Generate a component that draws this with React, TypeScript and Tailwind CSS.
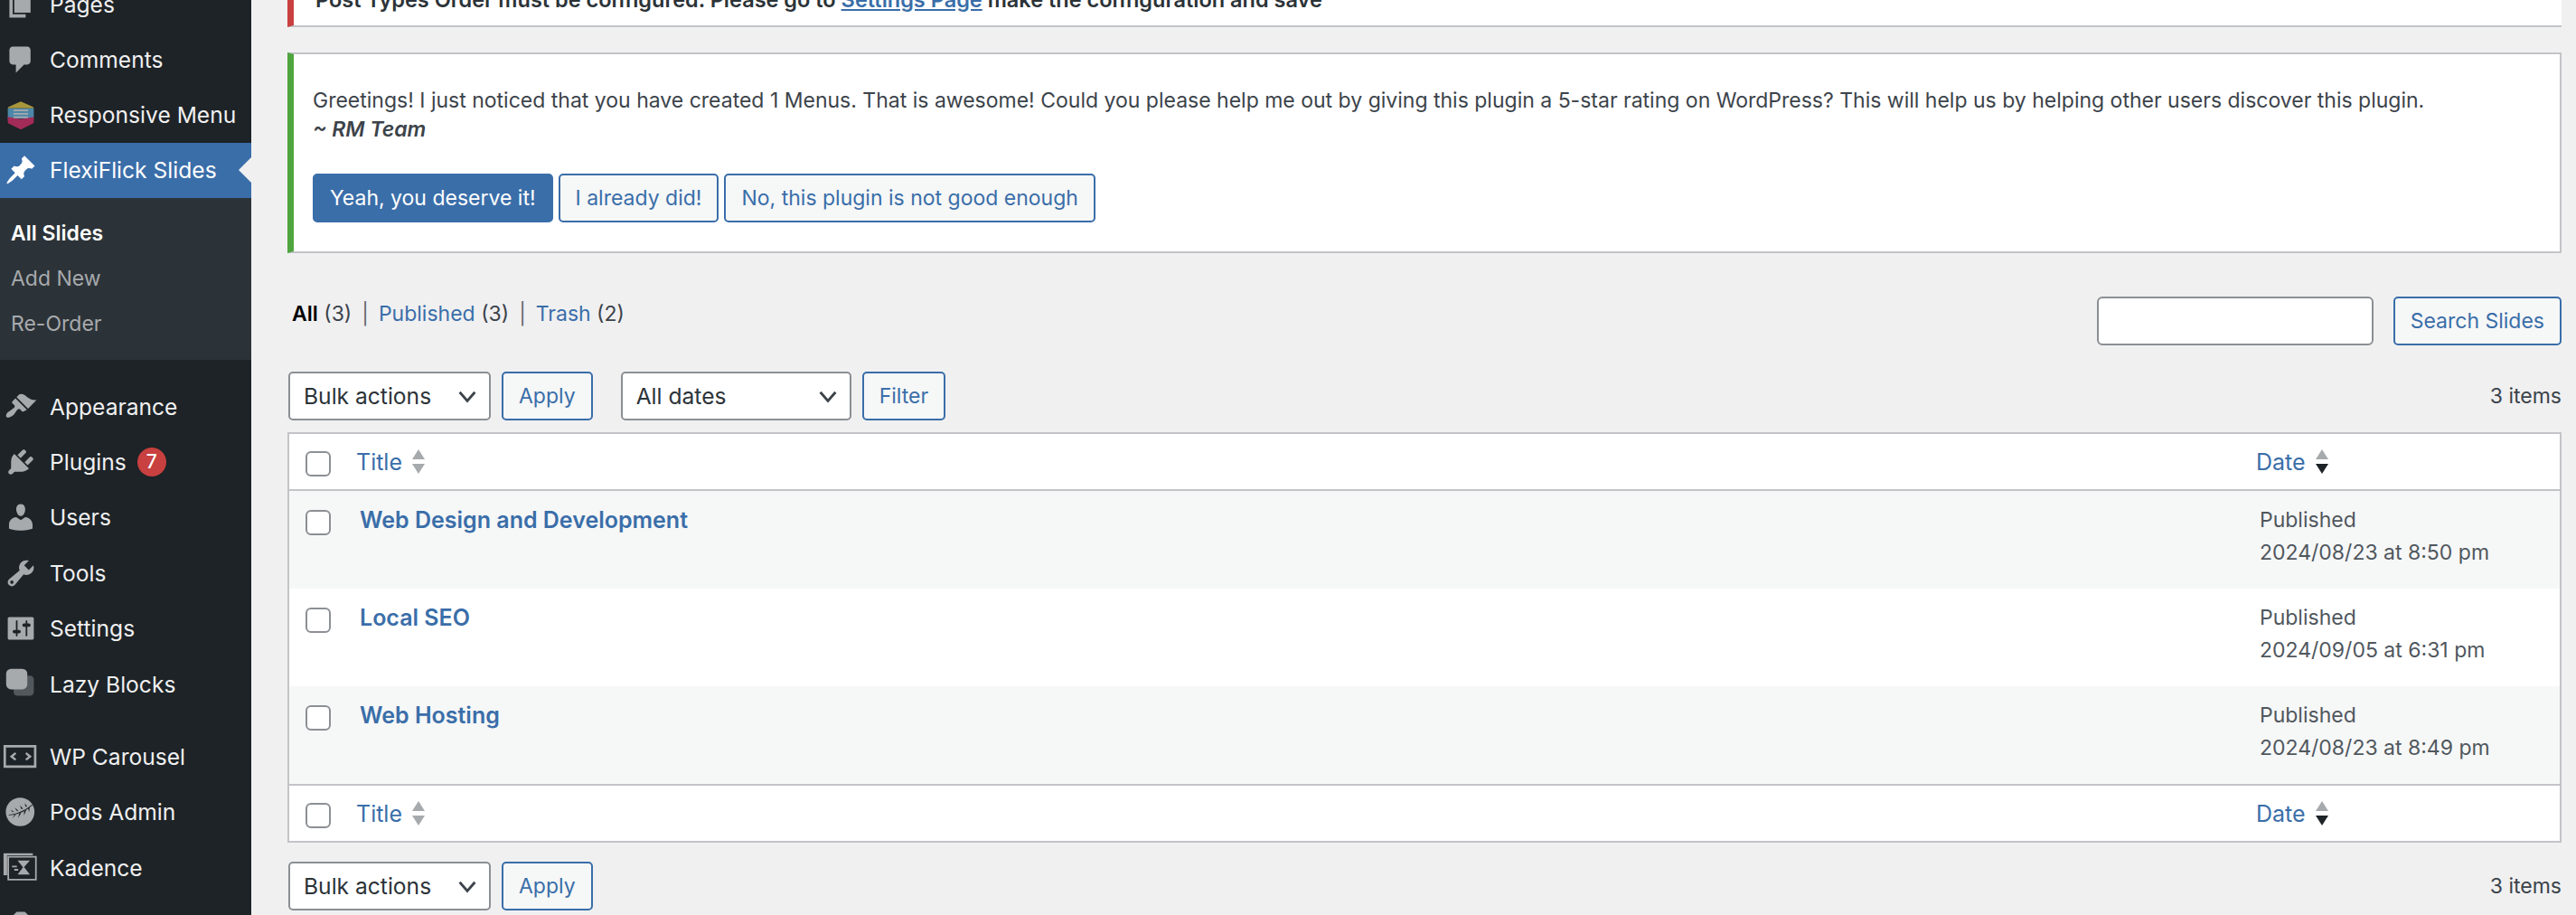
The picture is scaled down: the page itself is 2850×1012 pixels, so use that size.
import type { ReactNode } from 'react';

const icons: Record<string, ReactNode> = {
  pages: <path d="M6 15V2h10v13H6zm-1 1h8v2H3V5h2v11z" />,
  comments: <path d="M5 2h9q.82 0 1.41.59T16 4v7q0 .82-.59 1.41T14 13h-2l-5 5v-5H5q-.82 0-1.41-.59T3 11V4q0-.82.59-1.41T5 2z" />,
  pin: <path d="M10.44 3.02l1.82-1.82 6.36 6.35-1.83 1.82c-1.05-.68-2.48-.57-3.41.36l-.75.75c-.92.93-1.04 2.35-.35 3.41l-1.83 1.82-2.41-2.41-2.8 2.79c-.42.42-3.38 2.71-3.8 2.29s1.86-3.39 2.28-3.81l2.79-2.79L4.1 9.36l1.83-1.82c1.05.69 2.48.57 3.4-.36l.75-.75c.93-.92 1.05-2.35.36-3.41z" />,
  brush: <path d="M14.48 11.06L7.41 3.99l1.5-1.5c.5-.56 2.3-.47 3.51.32 1.21.8 1.43 1.28 2.91 2.1 1.18.64 2.45 1.26 4.45.85zm-.71.71L6.7 4.7 4.93 6.47c-.39.39-.39 1.02 0 1.41l1.06 1.06c.39.39.39 1.03 0 1.42-.6.6-1.43 1.11-2.21 1.69-.35.26-.7.53-1.01.84C1.43 13.23.99 15.2.99 15.2c-.33.75.6 1.71 1.32 1.38-.01 0 1.98-.44 3.32-1.78.31-.31.58-.66.84-1.01.58-.78 1.09-1.61 1.69-2.21.39-.39 1.02-.39 1.41 0l1.06 1.06c.39.39 1.02.39 1.41 0z" />,
  plug: <path d="M13.11 4.36L9.87 7.6 8 5.73l3.24-3.24c.35-.34 1.05-.2 1.56.32.52.51.66 1.21.31 1.55zm-8 1.77l.91-1.12 9.01 9.01-1.19.84c-.71.71-2.63 1.16-3.82 1.16H6.14L4.9 17.26c-.59.59-1.54.59-2.12 0-.59-.58-.59-1.53 0-2.12l1.24-1.24v-3.88c0-1.13.4-3.19 1.09-3.89zm7.26 3.97l3.24-3.24c.34-.35 1.04-.21 1.55.31.52.51.66 1.21.31 1.55l-3.24 3.25z" />,
  users: <path d="M10 9.25c-2.27 0-2.73-3.44-2.73-3.44C7 4.02 7.82 2 9.97 2c2.16 0 2.98 2.02 2.71 3.81 0 0-.41 3.44-2.68 3.44zm0 2.57L12.72 10c2.39 0 4.52 2.33 4.52 4.53v2.49s-3.65 1.13-7.24 1.13c-3.65 0-7.24-1.13-7.24-1.13v-2.49c0-2.25 1.94-4.48 4.47-4.48z" />,
  tools: <path d="M16.68 9.77c-1.34 1.34-3.3 1.67-4.95.99l-5.41 6.52c-.99.99-2.59.99-3.58 0s-.99-2.59 0-3.57l6.52-5.42c-.68-1.65-.35-3.61.99-4.95 1.28-1.28 3.12-1.62 4.72-1.06l-2.89 2.89 2.82 2.82 2.86-2.87c.53 1.58.18 3.39-1.08 4.65zM3.81 16.21c.4.39 1.04.39 1.43 0 .4-.4.4-1.04 0-1.43-.39-.4-1.03-.4-1.43 0-.39.39-.39 1.03 0 1.43z" />,
  settings: <path fillRule="evenodd" d="M18 16V4c0-.55-.45-1-1-1H3c-.55 0-1 .45-1 1v12c0 .55.45 1 1 1h14c.55 0 1-.45 1-1zM8 11h1c.55 0 1 .45 1 1s-.45 1-1 1H8v1.5c0 .28-.22.5-.5.5s-.5-.22-.5-.5V13H6c-.55 0-1-.45-1-1s.45-1 1-1h1V5.5c0-.28.22-.5.5-.5s.5.22.5.5V11zm5-2h-1c-.55 0-1-.45-1-1s.45-1 1-1h1V5.5c0-.28.22-.5.5-.5s.5.22.5.5V7h1c.55 0 1 .45 1 1s-.45 1-1 1h-1v5.5c0 .28-.22.5-.5.5s-.5-.22-.5-.5V9z" />,
  responsive: (
    <>
      <path fill="#a8963c" d="M10 1.8l7.6 3.4.4.8H2l.4-.8z" />
      <path fill="#4d86a8" d="M2 6h16v6.4H2z" />
      <path fill="#a32b58" d="M2 11.2l8 1.4 8-1.4v3.4l-.4.7L10 19l-7.6-3.7-.4-.7z" />
      <path fill="#a7aaad" d="M5.5 6.8h9v1h-9zm0 2.1h9v1h-9zm0 2.1h9v1h-9z" />
    </>
  ),
  lazy: (
    <>
      <rect x="5.6" y="4.6" width="12.4" height="12.4" rx="2.4" fill="#53585d" />
      <rect x="1" y="0.4" width="13" height="12.6" rx="3" />
    </>
  ),
  carousel: (
    <>
      <path fillRule="evenodd" d="M-.6 2.8h20.2v14H-.6zm1.5 1.5v11h17.2v-11z" />
      <path d="M6.4 7.2L3.2 9.8l3.2 2.6.9-1-1.9-1.6 1.9-1.6zm7.2 0l3.2 2.6-3.2 2.6-.9-1 1.9-1.6-1.9-1.6z" />
    </>
  ),
  pods: (
    <>
      <circle cx="9.6" cy="10" r="8.8" />
      <path d="M2.6 11.6c3.4-.2 9-1.6 14.4-6.2l.2.5c-5 4.6-10.6 6.2-14.6 6.2z" fill="#1d2327" />
      <path d="M5 10.2l-1.4-1.6 2.2 1.2zm2.6-.7L6.2 7.4l2.3 1.7zm2.8-1.1L9.4 6l2 1.9zm2.6-1.4l-.7-2.4 1.6 1.9zM6 11.8l-1.1 2.1 2.2-2.4zm3-.8l-.6 2.6 1.9-3zm3-1.4v2.6l1.4-3.4zm2.4-1.8l.8 2.2.2-3z" fill="#1d2327" />
    </>
  ),
  kadence: (
    <>
      <path d="M-.6 1h18v1.2H1.6v12.2H-.6z" />
      <path fillRule="evenodd" d="M1.8 2.6h18v15h-18zm1 1v13h16v-13z" />
      <path d="M8 5.4h7.6l-3.6 4 3.6 4.6H8l3.4-4.4zM4.6 8.6h3v1h-3zm1.4 2h2.4v1H6z" />
    </>
  ),
  camera: <path d="M2 5h3.5L7.5 3h5l2 2H18v13H2z" />,
};

type MenuItem = { label: string; icon: string; badge?: string };

const topItems: MenuItem[] = [
  { label: 'Pages', icon: 'pages' },
  { label: 'Comments', icon: 'comments' },
  { label: 'Responsive Menu', icon: 'responsive' },
];
const midItems: MenuItem[] = [
  { label: 'Appearance', icon: 'brush' },
  { label: 'Plugins', icon: 'plug', badge: '7' },
  { label: 'Users', icon: 'users' },
  { label: 'Tools', icon: 'tools' },
  { label: 'Settings', icon: 'settings' },
  { label: 'Lazy Blocks', icon: 'lazy' },
];
const lowItems: MenuItem[] = [
  { label: 'WP Carousel', icon: 'carousel' },
  { label: 'Pods Admin', icon: 'pods' },
  { label: 'Kadence', icon: 'kadence' },
  { label: '', icon: 'camera' },
];

const rows = [
  { title: 'Web Design and Development', date: '2024/08/23 at 8:50 pm', stripe: true },
  { title: 'Local SEO', date: '2024/09/05 at 6:31 pm', stripe: false },
  { title: 'Web Hosting', date: '2024/08/23 at 8:49 pm', stripe: true },
];

function MenuRow({ item }: { item: MenuItem }) {
  return (
    <div className="flex h-[61.4px] items-center text-[24.6px] text-[#f0f0f1]">
      <svg viewBox="0 0 20 20" className="ml-[5px] h-[36px] w-[36px] shrink-0 overflow-visible fill-[#a7aaad]">
        {icons[item.icon]}
      </svg>
      <span className="ml-[14px]">{item.label}</span>
      {item.badge && (
        <span className="ml-[12px] flex h-[32px] w-[32px] items-center justify-center rounded-full bg-[#c8403f] text-[21px] font-medium text-white">
          {item.badge}
        </span>
      )}
    </div>
  );
}

function Sidebar() {
  return (
    <aside className="-mt-[26.2px] h-[1100px] w-[278px] shrink-0 bg-[#1d2327]">
      {topItems.map((item) => (
        <MenuRow key={item.label} item={item} />
      ))}
      <div className="relative flex h-[61px] items-center bg-[#3a6ea9] text-[24.6px] text-white">
        <svg viewBox="0 0 20 20" className="ml-[5px] h-[36px] w-[36px] fill-white">
          {icons.pin}
        </svg>
        <span className="ml-[14px]">FlexiFlick Slides</span>
        <span className="absolute right-0 top-[16px] h-0 w-0 border-y-[14px] border-r-[14px] border-y-transparent border-r-[#f0f0f1]" />
      </div>
      <div className="flex h-[179px] flex-col justify-center gap-[22px] bg-[#2c3338] pl-[12px] text-[23px] leading-[28px] text-[#a7aaad]">
        <span className="font-semibold text-white">All Slides</span>
        <span>Add New</span>
        <span>Re-Order</span>
      </div>
      <div className="mt-[21px]">
        {midItems.map((item) => (
          <MenuRow key={item.label} item={item} />
        ))}
      </div>
      <div className="mt-[19px]">
        {lowItems.map((item) => (
          <MenuRow key={item.icon} item={item} />
        ))}
      </div>
    </aside>
  );
}

function Button({ children, primary }: { children: ReactNode; primary?: boolean }) {
  return (
    <button
      className={
        primary
          ? 'h-[54px] rounded-[5px] border-2 border-[#3a6ea9] bg-[#3a6ea9] px-[17px] text-white'
          : 'h-[54px] rounded-[5px] border-2 border-[#3a6ea9] bg-[#f6f7f7] px-[17px] text-[#3a6ea9]'
      }
    >
      {children}
    </button>
  );
}

function Select({ label, width }: { label: string; width: string }) {
  return (
    <div className={`flex h-[54px] items-center justify-between rounded-[5px] border-2 border-[#8c8f94] bg-white pl-[15px] pr-[12px] text-[24.6px] text-[#2c3338] ${width}`}>
      <span>{label}</span>
      <svg viewBox="0 0 20 20" className="h-[24px] w-[24px] fill-none stroke-[#3c434a] stroke-[2.4]">
        <path d="M3 6.5l7 8 7-8" />
      </svg>
    </div>
  );
}

function Checkbox() {
  return <input type="checkbox" className="h-[28px] w-[28px] shrink-0 appearance-none rounded-[6px] border-2 border-[#8c8f94] bg-white" />;
}

function SortArrows({ active }: { active?: boolean }) {
  return (
    <svg viewBox="0 0 14 28" className="h-[28px] w-[14px]">
      <path d="M7 0l7 11H0z" fill="#a7aaad" />
      <path d="M7 27L0 16h14z" fill={active ? '#1d2327' : '#a7aaad'} />
    </svg>
  );
}

function HeadRow({ border }: { border: string }) {
  return (
    <div className={`flex h-[63px] items-center bg-white text-[25px] ${border}`}>
      <div className="ml-[18px] mt-[5px] flex items-center">
        <Checkbox />
      </div>
      <div className="ml-[28px] flex flex-1 items-center gap-[11px] text-[#3a6ea9]">
        Title <SortArrows />
      </div>
      <div className="flex w-[336px] items-center gap-[11px] text-[#3a6ea9]">
        Date <SortArrows active />
      </div>
    </div>
  );
}

function Toolbar({ filters }: { filters?: boolean }) {
  return (
    <div className="flex h-[54px] items-center pl-px">
      <Select label="Bulk actions" width="w-[224px]" />
      <div className="ml-[12px]">
        <Button>Apply</Button>
      </div>
      {filters && (
        <>
          <div className="ml-[31px]">
            <Select label="All dates" width="w-[255px]" />
          </div>
          <div className="ml-[12px]">
            <Button>Filter</Button>
          </div>
        </>
      )}
      <span className="ml-auto text-[#3c434a]">3 items</span>
    </div>
  );
}

export default function App() {
  return (
    <div className="flex h-[1012px] overflow-hidden bg-[#f0f0f1] font-['Inter',sans-serif] text-[23px] leading-[36px] text-[#3c434a]">
      <Sidebar />
      <main className="-mt-[30px] min-w-0 flex-1 pl-[40px] pr-[16px]">
        <div className="flex h-[60px] items-start border-b-2 border-l-[7px] border-[#c3c4c7] border-l-[#c8403f] bg-white pl-[24px] pt-[12px] text-[23.5px] font-semibold text-[#2c3338]">
          <span>
            Post Types Order must be configured. Please go to{' '}
            <a href="#" className="text-[#3a6ea9] underline">
              Settings Page
            </a>{' '}
            make the configuration and save
          </span>
        </div>

        <section className="mt-[28px] h-[222px] border-y-2 border-r-2 border-l-[7px] border-[#c3c4c7] border-l-[#4fa53f] bg-white pl-[21px] pt-[35px]">
          <p className="leading-[32px]">
            Greetings! I just noticed that you have created 1 Menus. That is awesome! Could you please help me out by giving this plugin a 5-star rating on WordPress? This will help us by helping other users discover this plugin.
          </p>
          <p className="font-semibold italic leading-[32px]">~ RM Team</p>
          <div className="mt-[33px] flex gap-[6px]">
            <Button primary>Yeah, you deserve it!</Button>
            <Button>I already did!</Button>
            <Button>No, this plugin is not good enough</Button>
          </div>
        </section>

        <div className="mt-[48px] flex h-[54px] items-start justify-between">
          <div className="flex gap-[11px] pl-[5px] pt-px">
            <span>
              <span className="font-semibold text-black">All</span> (3)
            </span>
            <span className="text-[#646970]">|</span>
            <span>
              <a href="#" className="text-[#3a6ea9]">Published</a> (3)
            </span>
            <span className="text-[#646970]">|</span>
            <span>
              <a href="#" className="text-[#3a6ea9]">Trash</a> (2)
            </span>
          </div>
          <div className="flex gap-[22px]">
            <input className="h-[54px] w-[306px] rounded-[6px] border-2 border-[#8c8f94] bg-white" />
            <Button>Search Slides</Button>
          </div>
        </div>

        <div className="mt-[29px]">
          <Toolbar filters />
        </div>

        <div className="mt-[13px] border-2 border-[#c3c4c7] bg-white">
          <HeadRow border="border-b-2 border-[#c3c4c7]" />
          {rows.map((row) => (
            <div key={row.title} className={`flex h-[108px] items-start ${row.stripe ? 'bg-[#f6f7f7]' : 'bg-white'}`}>
              <div className="ml-[18px] mt-[21px] flex">
                <Checkbox />
              </div>
              <a href="#" className="ml-[32px] mt-[14px] flex-1 text-[25px] font-semibold text-[#3a6ea9]">
                {row.title}
              </a>
              <div className="mt-[14px] w-[332px] text-[#50575e]">
                Published
                <br />
                {row.date}
              </div>
            </div>
          ))}
          <HeadRow border="border-t-2 border-[#c3c4c7]" />
        </div>

        <div className="mt-[21px]">
          <Toolbar />
        </div>
      </main>
    </div>
  );
}
